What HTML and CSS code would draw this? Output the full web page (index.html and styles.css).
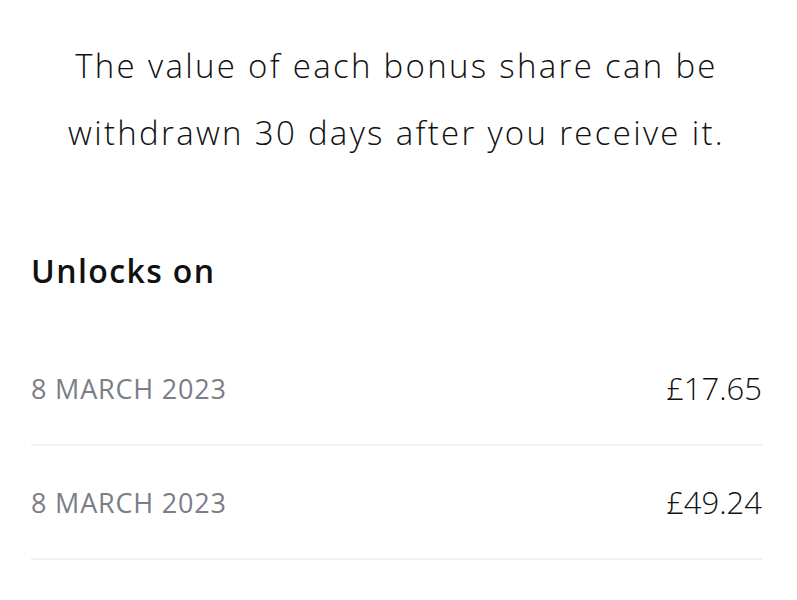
FILE: index.html
```html
<!DOCTYPE html>
<html>
<head>
  <title>Bonus shares</title>
  <link rel="stylesheet" href="styles.css">
</head>
<body>
  <div class="screen">
    <p class="intro">The value of each bonus share can be withdrawn 30 days after you receive it.</p>
    <h2 class="section-title">Unlocks on</h2>
    <div class="unlock-list">
      <div class="unlock-row">
        <span class="unlock-date">8 MARCH 2023</span>
        <span class="unlock-amount">£17.65</span>
      </div>
      <div class="unlock-row">
        <span class="unlock-date">8 MARCH 2023</span>
        <span class="unlock-amount">£49.24</span>
      </div>
    </div>
  </div>
</body>
</html>
```

FILE: styles.css
```css
body {
  margin: 0;
  padding: 0;
  background-color: #ffffff;
  color: #111111;
  font-family: 'Open Sans', 'Noto Sans', sans-serif;
}
.screen {
  padding: 32px 35px 0 31px;
}
.intro {
  margin: 0 auto;
  width: 700px;
  text-align: center;
  font-size: 33px;
  font-weight: 300;
  letter-spacing: 2.3px;
  line-height: 67px;
}
.section-title {
  margin: 85px 0 0 0;
  font-size: 32px;
  font-weight: 600;
  letter-spacing: 1.4px;
  line-height: 40px;
}
.unlock-list {
  margin-top: 41px;
}
.unlock-row {
  display: flex;
  justify-content: space-between;
  align-items: center;
  height: 112px;
  border-bottom: 2px solid #f1f1f1;
}
.unlock-date {
  font-size: 27px;
  font-weight: 500;
  letter-spacing: 0.8px;
  color: #7b7e86;
}
.unlock-amount {
  font-size: 31px;
  font-weight: 300;
  color: #111111;
}
```
